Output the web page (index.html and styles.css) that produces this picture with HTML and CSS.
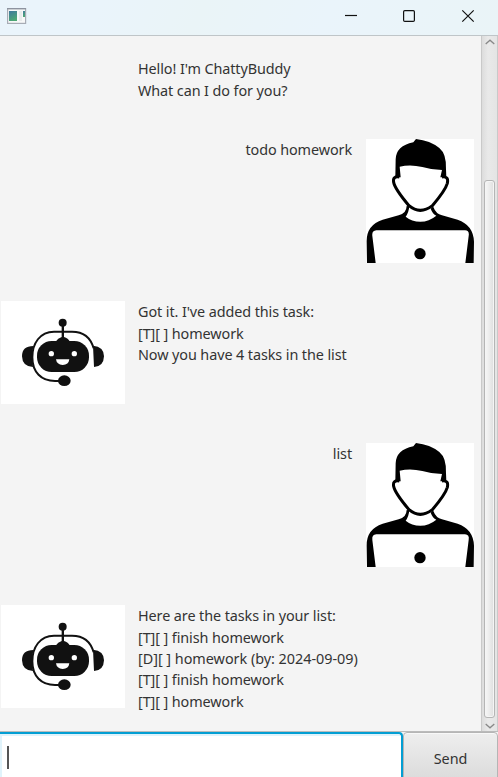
FILE: index.html
```html
<!DOCTYPE html>
<html lang="en">
<head>
<meta charset="utf-8">
<title>ChattyBuddy</title>
<link rel="stylesheet" href="styles.css">
</head>
<body>
<svg width="0" height="0" class="defs">
  <symbol id="user" viewBox="18 27 324 372">
    <path d="M106 142L107 88Q108 48 160 37L168 27Q211 32 238 54Q260 72 258 118L259 142H241L246 120Q217 120 187 111Q151 102 119 110L122 142Z"/>
    <path d="M118 141Q97 138 101 157Q105 177 147 227Q180 255 217 227Q256 181 262 160Q267 138 246 141" fill="none" stroke="#000" stroke-width="9"/>
    <path d="M140 228Q139 251 116 256L68 269Q19 285 20 335L21 399H47L37 318Q35 302 49 301H315Q329 302 326 318L316 399H341L342 335Q340 285 293 269L246 256Q228 253 219 229L212 236Q218 252 229 257Q207 275 181 275Q155 275 137 260Q146 249 148 229Z"/>
    <circle cx="180" cy="371" r="17"/>
  </symbol>
  <symbol id="bot" viewBox="3 18 372 309">
    <g fill="#111">
      <circle cx="188" cy="83" r="12"/>
      <path d="M185 90H192V126Q205 130 209 139H168Q173 130 185 126Z"/>
      <rect x="111" y="138" width="156" height="93" rx="44"/>
      <path d="M100 153Q66 153 66 184Q67 215 99 216Q94 184 100 153ZM279 152Q312 155 312 184Q311 215 282 216Z"/>
      <ellipse cx="193" cy="257" rx="19" ry="16"/>
    </g>
    <path d="M281 160Q267 110 216 110H162C120 110 97 145 97 187C97 232 124 258 165 258H180" fill="none" stroke="#111" stroke-width="6"/>
    <g fill="#fff"><circle cx="154" cy="176" r="8"/><circle cx="223" cy="176" r="8"/><path d="M168 193H208Q206 210 188 210Q170 209 168 193Z"/></g>
  </symbol>
</svg>
<div class="window">
  <header class="titlebar">
    <svg class="app-icon" width="20" height="17" viewBox="0 0 20 17">
      <defs><linearGradient id="pane" x2=".4" y2="1"><stop stop-color="#3f789e"/><stop offset="1" stop-color="#4da774"/></linearGradient></defs>
      <rect x=".6" y=".6" width="18" height="14.8" fill="#f7f8f8" stroke="#a7acb5" stroke-width="1.2"/>
      <path d="M0 .6H19" stroke="#8d939f" stroke-width="1.4"/>
      <rect x="2" y="3" width="8" height="10" fill="url(#pane)"/>
      <path d="M12 3H15V13H12Z" fill="#e9ecec"/><path d="M16 3H18V9H16Z" fill="url(#pane)"/>
    </svg>
    <svg class="controls" width="132" height="16" viewBox="0 0 132 16" fill="none" stroke="#111" stroke-width="1.2">
      <path d="M0 7.5H12"/><rect x="58.6" y="2.6" width="10.8" height="10.8" rx="1.2"/><path d="M117.3 2.3L128.7 13.7M128.7 2.3L117.3 13.7"/>
    </svg>
  </header>
  <main class="scroll">
    <div class="messages">
      <div class="row greeting"><div class="text"><p>Hello! I'm ChattyBuddy</p><p>What can I do for you?</p></div></div>
      <div class="row mine"><div class="text"><p>todo homework</p></div><svg class="user"><use href="#user"/></svg></div>
      <div class="row short"><svg class="bot"><use href="#bot"/></svg><div class="text"><p>Got it. I've added this task:</p><p>[T][ ] homework</p><p>Now you have 4 tasks in the list</p></div></div>
      <div class="row mine"><div class="text"><p>list</p></div><svg class="user"><use href="#user"/></svg></div>
      <div class="row"><svg class="bot"><use href="#bot"/></svg><div class="text"><p>Here are the tasks in your list:</p><p>[T][ ] finish homework</p><p class="dated">[D][ ] homework (by: 2024-09-09)</p><p>[T][ ] finish homework</p><p>[T][ ] homework</p></div></div>
    </div>
    <div class="scrollbar">
      <svg width="10" height="6" viewBox="0 0 10 6"><path d="M.7 5L5 1.2L9.3 5"/></svg>
      <div class="thumb"></div>
      <svg width="10" height="6" viewBox="0 0 10 6"><path d="M.7 1L5 4.8L9.3 1"/></svg>
    </div>
  </main>
  <footer class="composer"><div class="input"><span class="caret"></span></div><button class="send">Send</button></footer>
</div>
</body>
</html>
```
FILE: styles.css
```css
* { box-sizing: border-box; }
body { margin: 0; overflow: hidden; background: #f4f4f4; color: #333; font: 14.4px/21.3px "Noto Sans", "Open Sans", sans-serif; }
p { margin: 0; white-space: pre; }
.defs { position: absolute; }
.window { width: 498px; height: 777px; display: flex; flex-direction: column; }
.titlebar { height: 36px; flex: none; display: flex; align-items: flex-start; justify-content: space-between; padding: 8px 21px 0 7px; border-bottom: 1px solid #bfc5c8; background: linear-gradient(115deg, #eaf4fb 20%, #eaf4f7 40%, #eaf4fb 65%, #eaf4f7); }
.scroll { flex: none; height: 695px; display: flex; }
.messages { width: 481px; padding-top: 22px; }
.row { display: flex; height: 162px; padding-left: 1px; }
.row.greeting { height: 81px; padding-left: 125px; }
.row.mine { justify-content: flex-end; padding: 0 7px 0 0; }
.row.short { height: 142px; }
.text { padding: .4px 0 0 13px; letter-spacing: -.09px; }
.dated { letter-spacing: -.02px; }
.mine .text { padding: .4px 14px 0 0; }
.bot { width: 124px; height: 103px; background: #fff; }
.user { width: 108px; height: 124px; background: #fff; }
.row svg { flex: none; }
.scrollbar { width: 17px; display: flex; flex-direction: column; align-items: center; border: solid #c9c9c9; border-width: 0 1px; padding: 3px 0 2px; background: linear-gradient(90deg, #dcdcdc, #e9e9e9 40%, #e4e4e4); }
.scrollbar svg { flex: none; fill: none; stroke: #888; stroke-width: 1.3; }
.thumb { flex: none; width: 11px; height: 538px; margin: 135px 0 5px; border: 1px solid #b5b5b5; border-radius: 3px; background: linear-gradient(90deg, #f7f7f7, #eee 40%, #dedede); box-shadow: inset 0 0 0 1px #f5f5f5; }
.composer { height: 46px; flex: none; display: flex; border-top: 1px solid #bbb; }
.input { width: 403px; height: 54px; flex: none; padding: 12px 0 0 7px; background: #fff; border-top: 2px solid #039ed3; border-right: 2px solid #039ed3; border-radius: 0 4px 0 0; box-shadow: inset 2px 2px #e0f3fb; }
.caret { display: block; width: 2px; height: 23px; background: #555; }
.send { width: 95px; height: 54px; flex: none; padding: 0; border: 1px solid #b5b5b5; border-radius: 4px; background: linear-gradient(#eee, #d9d9d9); box-shadow: inset 0 1px #f8f8f8; color: #333; font: inherit; letter-spacing: -.1px; }
```
